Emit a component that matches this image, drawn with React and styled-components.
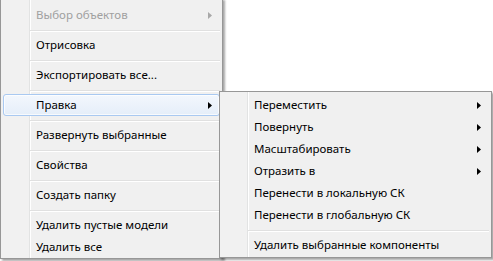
import React from "react";
import styled, { createGlobalStyle } from "styled-components";

const Global = createGlobalStyle`
  html, body { margin: 0; padding: 0; background: #ffffff; }
  body { font-family: "Noto Sans", "Open Sans", sans-serif; }
`;

const Stage = styled.div`
  position: relative;
  width: 493px;
  height: 261px;
  overflow: hidden;
  background: #ffffff;
  display: flex;
  align-items: flex-start;
`;

const Menu = styled.div`
  box-sizing: border-box;
  flex: none;
  width: ${(p) => p.$width}px;
  background: linear-gradient(
    to right,
    #f1f1f1 ${(p) => p.$gutter}px,
    #e2e3e3 ${(p) => p.$gutter}px,
    #e2e3e3 ${(p) => p.$gutter + 1}px,
    #ffffff ${(p) => p.$gutter + 1}px,
    #ffffff ${(p) => p.$gutter + 2}px,
    #f0f0f0 ${(p) => p.$gutter + 2}px
  );
  border: 1px solid #979797;
  box-shadow: 2px 2px 2px rgba(0, 0, 0, 0.35);
  padding: 2px;
  display: flex;
  flex-direction: column;
  font-size: 11.5px;
  color: #000;
`;

const MainMenu = styled(Menu)`
  margin-top: -2px;
  padding-top: 5px;
  border-top-color: transparent;
  height: 261px;
`;

const SubMenu = styled(Menu)`
  position: absolute;
  left: 219px;
  top: 91px;
  height: 167px;
  z-index: 2;
`;

const Item = styled.div`
  box-sizing: border-box;
  height: 22px;
  flex: none;
  display: flex;
  align-items: center;
  padding-left: ${(p) => p.$indent}px;
  padding-right: 7px;
  white-space: nowrap;
  color: ${(p) => (p.$disabled ? "#a0a0a0" : "#000")};
  border: 1px solid transparent;
  border-radius: 3px;
  ${(p) =>
    p.$active &&
    `
    border-color: #a9c9f1;
    background: linear-gradient(to bottom, #f3f7fd 0%, #e5eef9 100%);
    box-shadow: inset 0 0 0 1px rgba(255,255,255,0.7);
  `}
`;

const Label = styled.span`
  flex: 1;
  line-height: 20px;
  margin-top: -1px;
`;

const Arrow = styled.svg`
  width: 4px;
  height: 7px;
  flex: none;
`;

const Separator = styled.div`
  height: 8px;
  flex: none;
  margin-left: ${(p) => p.$indent}px;
  display: flex;
  flex-direction: column;
  justify-content: center;
  padding-top: 1px;
  box-sizing: border-box;
  &::before {
    content: "";
    display: block;
    height: 1px;
    background: #e0e0e0;
  }
  &::after {
    content: "";
    display: block;
    height: 1px;
    background: #ffffff;
  }
`;

const ArrowIcon = ({ disabled }) => (
  <Arrow viewBox="0 0 4 7">
    <path d="M0 0 L4 3.5 L0 7 Z" fill={disabled ? "#a8a8a8" : "#000"} />
  </Arrow>
);

const mainItems = [
  { label: "Выбор объектов", disabled: true, sub: true },
  "sep",
  { label: "Отрисовка" },
  "sep",
  { label: "Экспортировать все..." },
  "sep",
  { label: "Правка", sub: true, active: true },
  "sep",
  { label: "Развернуть выбранные" },
  "sep",
  { label: "Свойства" },
  "sep",
  { label: "Создать папку" },
  "sep",
  { label: "Удалить пустые модели" },
  { label: "Удалить все" },
];

const subItems = [
  { label: "Переместить", sub: true },
  { label: "Повернуть", sub: true },
  { label: "Масштабировать", sub: true },
  { label: "Отразить в", sub: true },
  { label: "Перенести в локальную СК" },
  { label: "Перенести в глобальную СК" },
  "sep",
  { label: "Удалить выбранные компоненты" },
];

const renderItems = (items, indent, sepIndent) =>
  items.map((it, i) =>
    it === "sep" ? (
      <Separator key={i} $indent={sepIndent} />
    ) : (
      <Item key={i} $indent={indent} $disabled={it.disabled} $active={it.active}>
        <Label>{it.label}</Label>
        {it.sub && <ArrowIcon disabled={it.disabled} />}
      </Item>
    )
  );

export default function App() {
  return (
    <Stage>
      <Global />
      <MainMenu $width={223} $gutter={28}>
        {renderItems(mainItems, 32, 27)}
      </MainMenu>
      <SubMenu $width={273} $gutter={27}>
        {renderItems(subItems, 31, 26)}
      </SubMenu>
    </Stage>
  );
}
